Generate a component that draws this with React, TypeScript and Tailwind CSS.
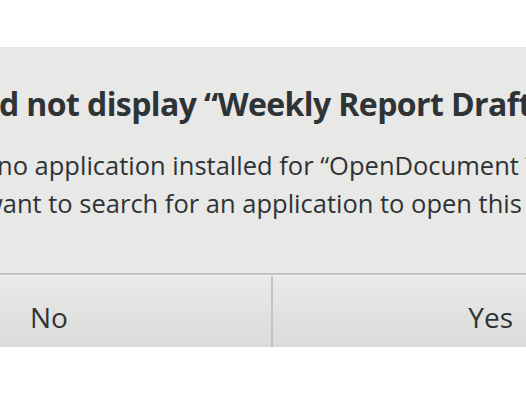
export default function App() {
  return (
    <div className="h-[394px] w-[526px] overflow-hidden bg-white font-['Open_Sans',sans-serif] text-[#2e3436]">
      <div className="mt-[47px] flex h-[300px] flex-col bg-[#e8e8e7]">
        {/* message */}
        <div className="flex-1 overflow-hidden pt-[37px]">
          <h1 className="ml-[-1px] whitespace-nowrap text-[32px] font-bold leading-[40px] tracking-[-0.6px]">
            d not display “Weekly Report Draft.odt”.
          </h1>
          <div className="mt-[22px] text-[25.5px] leading-[38px]">
            <p className="ml-[-3px] whitespace-nowrap">no application installed for “OpenDocument Text” files.</p>
            <p className="ml-[-17px] whitespace-nowrap">want to search for an application to open this file?</p>
          </div>
        </div>

        <div className="h-[2px] bg-[#c3c3c1]" />

        {/* buttons */}
        <div className="flex h-[72px] border-t border-[#f4f4f3] text-[28px] leading-[32px]">
          <button className="flex-1 bg-linear-to-b from-[#e9e9e8] to-[#dbdbda] pl-[30px] pt-[10px] text-left">
            No
          </button>
          <div className="w-[2px] bg-[#c3c3c1]" />
          <button className="flex-1 bg-linear-to-b from-[#e9e9e8] to-[#dbdbda] pr-[13px] pt-[10px] text-right">
            Yes
          </button>
        </div>
      </div>
    </div>
  )
}
